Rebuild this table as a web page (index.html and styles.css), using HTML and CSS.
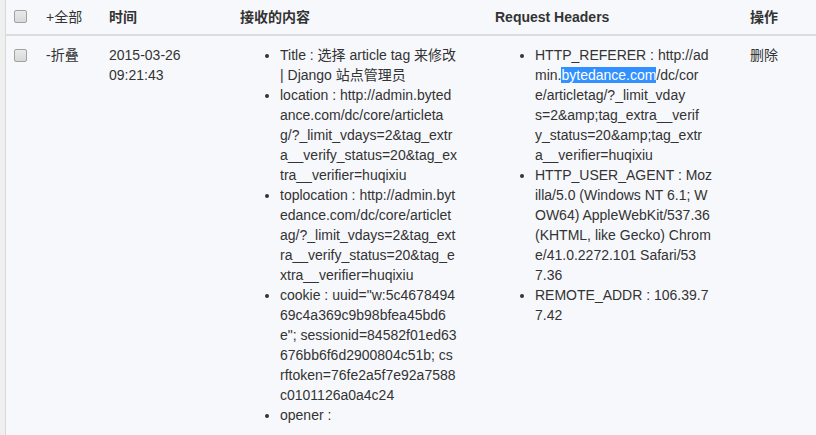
FILE: index.html
```html
<!DOCTYPE html>
<html lang="zh-CN">
<head>
<meta charset="utf-8">
<title>Records</title>
<link rel="stylesheet" href="styles.css">
</head>
<body>
<div class="page">
  <div class="content">
    <table class="records">
      <colgroup>
        <col class="c-check">
        <col class="c-toggle">
        <col class="c-time">
        <col class="c-body">
        <col class="c-headers">
        <col class="c-ops">
      </colgroup>
      <thead>
        <tr>
          <th><span class="checkbox"></span></th>
          <th><span class="toggle">+全部</span></th>
          <th>时间</th>
          <th>接收的内容</th>
          <th>Request Headers</th>
          <th>操作</th>
        </tr>
      </thead>
      <tbody>
        <tr>
          <td><span class="checkbox row-check"></span></td>
          <td>-折叠</td>
          <td>2015-03-26<br>09:21:43</td>
          <td>
            <ul class="kv">
              <li>Title : 选择 article tag 来修改<br>| Django 站点管理员</li>
              <li>location : http://admin.byted<br>ance.com/dc/core/articleta<br>g/?_limit_vdays=2&amp;tag_extr<br>a__verify_status=20&amp;tag_ex<br>tra__verifier=huqixiu</li>
              <li>toplocation : http://admin.byt<br>edance.com/dc/core/articlet<br>ag/?_limit_vdays=2&amp;tag_ext<br>ra__verify_status=20&amp;tag_e<br>xtra__verifier=huqixiu</li>
              <li>cookie : uuid="w:5c4678494<br>69c4a369c9b98bfea45bd6<br>e"; sessionid=84582f01ed63<br>676bb6f6d2900804c51b; cs<br>rftoken=76fe2a5f7e92a7588<br>c0101126a0a4c24</li>
              <li>opener :</li>
            </ul>
          </td>
          <td>
            <ul class="kv">
              <li>HTTP_REFERER : http://ad<br>min.<span class="selected">bytedance.com</span>/dc/cor<br>e/articletag/?_limit_vday<br>s=2&amp;amp;tag_extra__verif<br>y_status=20&amp;amp;tag_extr<br>a__verifier=huqixiu</li>
              <li>HTTP_USER_AGENT : Moz<br>illa/5.0 (Windows NT 6.1; W<br>OW64) AppleWebKit/537.36<br>(KHTML, like Gecko) Chrom<br>e/41.0.2272.101 Safari/53<br>7.36</li>
              <li>REMOTE_ADDR : 106.39.7<br>7.42</li>
            </ul>
          </td>
          <td>删除</td>
        </tr>
      </tbody>
    </table>
  </div>
</div>
</body>
</html>
```
FILE: styles.css
```css
html, body {
  margin: 0;
  padding: 0;
  overflow: hidden;
  background: #f7f8fc;
}

body {
  font-family: "Liberation Sans", Arial, "Microsoft YaHei", "Noto Sans CJK SC", sans-serif;
  font-size: 14px;
  line-height: 20px;
  color: #333;
}

.page {
  border-left: 5px solid #efefef;
  min-height: 435px;
}

.content {
  border-left: 1px solid #d9d9d9;
  background: #f7f8fc;
  min-height: 435px;
}

.records {
  width: 810px;
  table-layout: fixed;
  border-collapse: collapse;
  border-spacing: 0;
}

.c-check { width: 32px; }
.c-toggle { width: 63px; }
.c-time { width: 131px; }
.c-body { width: 255px; }
.c-headers { width: 255px; }
.c-ops { width: 74px; }

.records th {
  text-align: left;
  font-weight: bold;
  padding: 7px 8px;
  border-bottom: 2px solid #ddd;
  vertical-align: top;
}

.records td {
  padding: 9px 8px 8px;
  vertical-align: top;
}

.toggle {
  font-weight: normal;
}

.checkbox {
  display: block;
  width: 11px;
  height: 11px;
  margin-top: 3px;
  border: 1px solid #a2a2a2;
  border-radius: 2px;
  background: linear-gradient(#e9e9e9, #d9d9d9);
}

.row-check {
  margin-top: 4px;
}

.kv {
  margin: 0;
  padding-left: 40px;
}

.kv li {
  white-space: nowrap;
}

.selected {
  background: #3390ff;
  color: #fff;
}
```
